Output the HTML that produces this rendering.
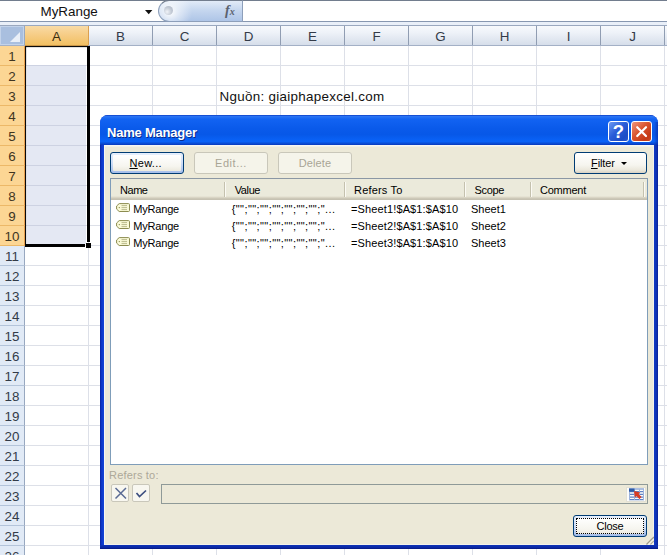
<!DOCTYPE html>
<html><head><meta charset="utf-8"><title>Name Manager</title>
<style>
html,body{margin:0;padding:0;}
body{width:667px;height:555px;overflow:hidden;background:#fff;position:relative;font-family:"Liberation Sans",sans-serif;}
.abs,.abs>*{position:absolute;}
#sheet{left:0;top:0;width:667px;height:555px;overflow:hidden;
 background-color:#fff;}
.cal{font-family:"Liberation Sans",sans-serif;font-size:13.4px;color:#1a1a1a;white-space:nowrap;}
.tah{font-family:"Liberation Sans",sans-serif;font-size:11px;color:#000;white-space:nowrap;}
.vl{position:absolute;width:1px;background:#dde0e8;top:46px;height:509px;}
.hl{position:absolute;height:1px;background:#dde0e8;left:25px;width:642px;}
.ch{position:absolute;top:26px;height:19px;width:63px;text-align:center;line-height:21px;color:#333b48;
 background:linear-gradient(#f7f9fc 0%,#eef2f8 35%,#d6deea 100%);border-right:1px solid #909db2;}
.rh{position:absolute;left:0;width:24px;height:19px;text-align:center;line-height:21px;color:#333b48;
 background:#e1eaf6;border-right:1px solid #98a8c0;border-bottom:1px solid #b4c4da;}
.rh.sel{background:#fcd694;border-bottom-color:#ecb868;border-right-color:#e8a04c;color:#40351f;}
</style></head><body>
<div id="sheet" class="abs">

<div style="left:0;top:0;width:667px;height:1px;background:#727d8e"></div>
<div style="left:0;top:1px;width:667px;height:20px;background:#fff"></div>
<div style="left:0;top:21px;width:667px;height:5px;background:#e9eff8"></div>
<div style="left:0;top:21px;width:667px;height:1px;background:#8797b0"></div>
<div style="left:0;top:25px;width:667px;height:1px;background:#9aa8bf"></div>
<div style="left:158px;top:0;width:85px;height:22px;background:radial-gradient(circle at 11px 11px,rgba(255,255,255,0.95) 0,rgba(255,255,255,0.5) 9px,rgba(255,255,255,0) 22px),linear-gradient(#e2ebf8 0%,#c6d7ef 45%,#aec5e7 100%);border-radius:11px 0 0 11px;border:1px solid #8d9fba;border-top-color:#727d8e;box-sizing:border-box"></div>
<div style="left:164px;top:6px;width:9px;height:9px;border-radius:50%;background:radial-gradient(circle at 35% 65%,#f0f3f8 0,#c4cbd6 50%,#a8b2c2 100%)"></div>
<div style="left:225px;top:2px;font-family:'Liberation Serif',serif;font-style:italic;font-weight:bold;font-size:14px;color:#5a616e;line-height:18px">f<span style="font-size:10px">x</span></div>
<div class="cal" style="left:40.5px;top:3px;line-height:18px;color:#111">MyRange</div>
<svg style="left:144px;top:9px" width="10" height="7" viewBox="0 0 10 7"><path d="M1 1h7.4l-3.7 4.3z" fill="#111"/></svg>
<div class="vl" style="left:88px"></div>
<div class="vl" style="left:152px"></div>
<div class="vl" style="left:216px"></div>
<div class="vl" style="left:280px"></div>
<div class="vl" style="left:344px"></div>
<div class="vl" style="left:408px"></div>
<div class="vl" style="left:472px"></div>
<div class="vl" style="left:536px"></div>
<div class="vl" style="left:600px"></div>
<div class="vl" style="left:664px"></div>
<div class="hl" style="top:65px"></div>
<div class="hl" style="top:85px"></div>
<div class="hl" style="top:105px"></div>
<div class="hl" style="top:125px"></div>
<div class="hl" style="top:145px"></div>
<div class="hl" style="top:165px"></div>
<div class="hl" style="top:185px"></div>
<div class="hl" style="top:205px"></div>
<div class="hl" style="top:225px"></div>
<div class="hl" style="top:245px"></div>
<div class="hl" style="top:265px"></div>
<div class="hl" style="top:285px"></div>
<div class="hl" style="top:305px"></div>
<div class="hl" style="top:325px"></div>
<div class="hl" style="top:345px"></div>
<div class="hl" style="top:365px"></div>
<div class="hl" style="top:385px"></div>
<div class="hl" style="top:405px"></div>
<div class="hl" style="top:425px"></div>
<div class="hl" style="top:445px"></div>
<div class="hl" style="top:465px"></div>
<div class="hl" style="top:485px"></div>
<div class="hl" style="top:505px"></div>
<div class="hl" style="top:525px"></div>
<div class="hl" style="top:545px"></div>
<div class="hl" style="top:565px"></div>
<div style="left:27px;top:66px;width:59px;height:178px;background:#e4e8f3"></div>
<div style="left:27px;top:65px;width:59px;height:1px;background:#cdd2e2"></div>
<div style="left:27px;top:85px;width:59px;height:1px;background:#cdd2e2"></div>
<div style="left:27px;top:105px;width:59px;height:1px;background:#cdd2e2"></div>
<div style="left:27px;top:125px;width:59px;height:1px;background:#cdd2e2"></div>
<div style="left:27px;top:145px;width:59px;height:1px;background:#cdd2e2"></div>
<div style="left:27px;top:165px;width:59px;height:1px;background:#cdd2e2"></div>
<div style="left:27px;top:185px;width:59px;height:1px;background:#cdd2e2"></div>
<div style="left:27px;top:205px;width:59px;height:1px;background:#cdd2e2"></div>
<div style="left:27px;top:225px;width:59px;height:1px;background:#cdd2e2"></div>
<div style="left:0;top:26px;width:667px;height:19px;background:linear-gradient(#f9fbfd 0%,#eef2f8 35%,#d9e0ec 100%)"></div>
<div style="left:0;top:45px;width:667px;height:1px;background:#a3b0c6"></div>
<div style="left:0;top:26px;width:24px;height:19px;background:#a9bfdf;border-right:1px solid #98a8c0;box-shadow:inset 1px 1px 0 #c3d3ea,inset -1px -1px 0 #c3d3ea"></div>
<svg style="left:9px;top:31px" width="12" height="12" viewBox="0 0 12 12"><path d="M11 1V11H1z" fill="#e9eff8"/></svg>
<div class="ch cal" style="left:25px;background:linear-gradient(#f9dba6 0%,#f6cc84 50%,#f1c063 100%);border-right-color:#dba050;color:#3a2d10">A</div>
<div class="ch cal" style="left:89px">B</div>
<div class="ch cal" style="left:153px">C</div>
<div class="ch cal" style="left:217px">D</div>
<div class="ch cal" style="left:281px">E</div>
<div class="ch cal" style="left:345px">F</div>
<div class="ch cal" style="left:409px">G</div>
<div class="ch cal" style="left:473px">H</div>
<div class="ch cal" style="left:537px">I</div>
<div class="ch cal" style="left:601px">J</div>
<div style="left:25px;top:45px;width:63px;height:1px;background:#c99548"></div>
<div class="rh cal sel" style="top:46px">1</div>
<div class="rh cal sel" style="top:66px">2</div>
<div class="rh cal sel" style="top:86px">3</div>
<div class="rh cal sel" style="top:106px">4</div>
<div class="rh cal sel" style="top:126px">5</div>
<div class="rh cal sel" style="top:146px">6</div>
<div class="rh cal sel" style="top:166px">7</div>
<div class="rh cal sel" style="top:186px">8</div>
<div class="rh cal sel" style="top:206px">9</div>
<div class="rh cal sel" style="top:226px">10</div>
<div class="rh cal" style="top:246px">11</div>
<div class="rh cal" style="top:266px">12</div>
<div class="rh cal" style="top:286px">13</div>
<div class="rh cal" style="top:306px">14</div>
<div class="rh cal" style="top:326px">15</div>
<div class="rh cal" style="top:346px">16</div>
<div class="rh cal" style="top:366px">17</div>
<div class="rh cal" style="top:386px">18</div>
<div class="rh cal" style="top:406px">19</div>
<div class="rh cal" style="top:426px">20</div>
<div class="rh cal" style="top:446px">21</div>
<div class="rh cal" style="top:466px">22</div>
<div class="rh cal" style="top:486px">23</div>
<div class="rh cal" style="top:506px">24</div>
<div class="rh cal" style="top:526px">25</div>
<div class="rh cal" style="top:546px">26</div>
<div style="left:25px;top:46px;width:65px;height:1px;background:#0a0a0a"></div>
<div style="left:25px;top:47px;width:62px;height:1px;background:rgba(0,0,0,0.12)"></div>
<div style="left:25px;top:46px;width:1px;height:201px;background:#0a0a0a"></div>
<div style="left:26px;top:47px;width:1px;height:197px;background:rgba(0,0,0,0.12)"></div>
<div style="left:87px;top:46px;width:3px;height:196px;background:#000"></div>
<div style="left:25px;top:244px;width:60px;height:3px;background:#000"></div>
<div style="left:86px;top:243px;width:5px;height:5px;background:#000"></div>
<div class="cal" style="left:219.5px;top:87px;line-height:20px;color:#111;letter-spacing:0.3px">Nguồn: giaiphapexcel.com</div>
</div>
<div id="dlg" class="abs" style="position:absolute;left:100px;top:115px;width:558px;height:434px">
<div style="left:0;top:0;width:558px;height:434px;background:#0d36c6;border-radius:8px 8px 0 0"></div>
<div style="left:0;top:30px;width:4px;height:404px;background:linear-gradient(90deg,#0a239f 0,#0d36c6 1.5px,#1545d8 4px)"></div>
<div style="left:554px;top:30px;width:4px;height:404px;background:linear-gradient(270deg,#0a1f96 0,#0d30b2 1.5px,#123ac4 4px)"></div>
<div style="left:0;top:430px;width:558px;height:4px;background:linear-gradient(0deg,#06167e 0,#0a28a4 1.5px,#0f34b8 4px)"></div>
<div style="left:0;top:0;width:558px;height:30px;border-radius:8px 8px 0 0;background:linear-gradient(#0a3cc4 0%,#2a74f4 5%,#1263f2 14%,#0a5aea 45%,#0758e8 65%,#0a63f8 88%,#0a4cd4 95%,#0838bc 100%)"></div>
<div style="left:4px;top:30px;width:550px;height:400px;background:#ece9d8;box-shadow:inset 1px 1px 0 #f6f6f2,inset 0 2px 0 #f1f0e8,inset -1px -1px 0 #f3f2ea"></div>
<div style="left:7px;top:9.5px;font-family:'Liberation Sans',sans-serif;font-weight:bold;font-size:13px;letter-spacing:-0.22px;color:#fff;line-height:16px;text-shadow:1px 1px 0 #0a2a8a;white-space:nowrap">Name Manager</div>
<div style="left:554px;top:7px;width:4px;height:23px;background:linear-gradient(90deg,rgba(8,30,150,0) 0,rgba(8,30,150,0.55) 100%)"></div>
<div style="left:508px;top:6px;width:21px;height:21px;box-sizing:border-box;border:1px solid #fff;border-radius:3px;background:linear-gradient(135deg,#6c9af2,#2a5cd8 45%,#1c4cc6 80%,#2858d2)"></div>
<div style="left:508px;top:6px;width:21px;height:21px;text-align:center;line-height:22px;color:#fff;font-weight:bold;font-size:18.5px;font-family:'Liberation Sans',sans-serif">?</div>
<div style="left:531px;top:6px;width:21px;height:21px;box-sizing:border-box;border:1px solid #fff;border-radius:3px;background:linear-gradient(135deg,#ee967c,#d8522e 45%,#c43a16 80%,#cc4a26)"></div>
<svg style="left:531px;top:6px" width="21" height="21" viewBox="0 0 21 21"><path d="M6.2 6.2L15 15M15 6.2L6.2 15" stroke="#fff" stroke-width="2.2" stroke-linecap="round"/></svg>
<div style="left:10px;top:37px;width:74px;height:22px;box-sizing:border-box;border:1px solid #003c74;border-radius:3px;background:linear-gradient(#e6effc 0%,#cfdef6 50%,#a4bdea 100%)"></div>
<div style="left:13px;top:40px;width:68px;height:16px;border-radius:1px;background:linear-gradient(#ffffff 0%,#f6f5ef 70%,#ece9de 100%)"></div>
<div class="tah" style="left:29.5px;top:37px;line-height:23px;letter-spacing:0.3px"><u>N</u>ew...</div>
<div style="left:94px;top:37px;width:74px;height:22px;box-sizing:border-box;border:1px solid #c9c7ba;border-radius:3px;background:#f5f4ea;"></div>
<div class="tah" style="left:94px;top:37px;width:74px;height:22px;text-align:center;line-height:23px;color:#a9a596;letter-spacing:0.55px">Edit...</div>
<div style="left:178px;top:37px;width:74px;height:22px;box-sizing:border-box;border:1px solid #c9c7ba;border-radius:3px;background:#f5f4ea;"></div>
<div class="tah" style="left:178px;top:37px;width:74px;height:22px;text-align:center;line-height:23px;color:#a9a596;letter-spacing:0.1px">Delete</div>
<div style="left:474px;top:37px;width:73px;height:22px;box-sizing:border-box;border:1px solid #003c74;border-radius:3px;background:linear-gradient(#ffffff 0%,#f6f5ef 60%,#ebe8dc 85%,#d8d2c4 100%);"></div>
<div class="tah" style="left:491px;top:37px;line-height:23px;letter-spacing:-0.1px"><u>F</u>ilter</div>
<div style="left:521px;top:47px;width:0;height:0;border-left:3px solid transparent;border-right:3px solid transparent;border-top:3px solid #000"></div>
<div style="left:10px;top:63px;width:538px;height:287px;box-sizing:border-box;border:1px solid #7f9db9;border-top-color:#8b97a4;background:#fff"></div>
<div style="left:11px;top:64px;width:536px;height:21px;background:linear-gradient(#ebeadb 0px,#ebeadb 17px,#e0dccc 18px,#d2cebd 19px,#c6c2b2 20px,#c6c2b2 21px)"></div>
<div style="left:124px;top:67px;width:1px;height:15px;background:#c4c1ae"></div>
<div style="left:125px;top:67px;width:1px;height:15px;background:#fbfaf4"></div>
<div style="left:244px;top:67px;width:1px;height:15px;background:#c4c1ae"></div>
<div style="left:245px;top:67px;width:1px;height:15px;background:#fbfaf4"></div>
<div style="left:364px;top:67px;width:1px;height:15px;background:#c4c1ae"></div>
<div style="left:365px;top:67px;width:1px;height:15px;background:#fbfaf4"></div>
<div style="left:430px;top:67px;width:1px;height:15px;background:#c4c1ae"></div>
<div style="left:431px;top:67px;width:1px;height:15px;background:#fbfaf4"></div>
<div style="left:543px;top:67px;width:1px;height:15px;background:#c4c1ae"></div>
<div style="left:544px;top:67px;width:1px;height:15px;background:#fbfaf4"></div>
<div class="tah" style="left:20px;top:66px;line-height:19px;letter-spacing:-0.45px">Name</div>
<div class="tah" style="left:134.7px;top:66px;line-height:19px;letter-spacing:-0.38px">Value</div>
<div class="tah" style="left:254px;top:66px;line-height:19px;letter-spacing:0.19px">Refers To</div>
<div class="tah" style="left:374.5px;top:66px;line-height:19px;letter-spacing:-0.34px">Scope</div>
<div class="tah" style="left:440px;top:66px;line-height:19px;letter-spacing:-0.24px">Comment</div>
<svg style="left:16px;top:88px" width="14" height="10" viewBox="0 0 14 10"><path d="M3.2 0.6h9.3a1 1 0 0 1 1 1v5.9a1 1 0 0 1-1 1h-9.3l-2.6-2.4v-3.1z" fill="#fafad8" stroke="#8c8c50" stroke-width="1"/><path d="M5.5 2.6h5.5M5.5 4.6h5.5M5.5 6.6h5.5" stroke="#b4b484" stroke-width="0.9"/><circle cx="3.3" cy="4.6" r="0.7" fill="#8c8c50"/></svg>
<div class="tah" style="left:33.30000000000001px;top:86px;line-height:17px;letter-spacing:-0.2px">MyRange</div>
<div class="tah" style="left:131.7px;top:86px;line-height:17px;letter-spacing:0.42px">{"";"";"";"";"";"";"";"...</div>
<div class="tah" style="left:251px;top:86px;line-height:17px;letter-spacing:0.13px">=Sheet1!$A$1:$A$10</div>
<div class="tah" style="left:371px;top:86px;line-height:17px">Sheet1</div>
<svg style="left:16px;top:105px" width="14" height="10" viewBox="0 0 14 10"><path d="M3.2 0.6h9.3a1 1 0 0 1 1 1v5.9a1 1 0 0 1-1 1h-9.3l-2.6-2.4v-3.1z" fill="#fafad8" stroke="#8c8c50" stroke-width="1"/><path d="M5.5 2.6h5.5M5.5 4.6h5.5M5.5 6.6h5.5" stroke="#b4b484" stroke-width="0.9"/><circle cx="3.3" cy="4.6" r="0.7" fill="#8c8c50"/></svg>
<div class="tah" style="left:33.30000000000001px;top:103px;line-height:17px;letter-spacing:-0.2px">MyRange</div>
<div class="tah" style="left:131.7px;top:103px;line-height:17px;letter-spacing:0.42px">{"";"";"";"";"";"";"";"...</div>
<div class="tah" style="left:251px;top:103px;line-height:17px;letter-spacing:0.13px">=Sheet2!$A$1:$A$10</div>
<div class="tah" style="left:371px;top:103px;line-height:17px">Sheet2</div>
<svg style="left:16px;top:122px" width="14" height="10" viewBox="0 0 14 10"><path d="M3.2 0.6h9.3a1 1 0 0 1 1 1v5.9a1 1 0 0 1-1 1h-9.3l-2.6-2.4v-3.1z" fill="#fafad8" stroke="#8c8c50" stroke-width="1"/><path d="M5.5 2.6h5.5M5.5 4.6h5.5M5.5 6.6h5.5" stroke="#b4b484" stroke-width="0.9"/><circle cx="3.3" cy="4.6" r="0.7" fill="#8c8c50"/></svg>
<div class="tah" style="left:33.30000000000001px;top:120px;line-height:17px;letter-spacing:-0.2px">MyRange</div>
<div class="tah" style="left:131.7px;top:120px;line-height:17px;letter-spacing:0.42px">{"";"";"";"";"";"";"";"...</div>
<div class="tah" style="left:251px;top:120px;line-height:17px;letter-spacing:0.13px">=Sheet3!$A$1:$A$10</div>
<div class="tah" style="left:371px;top:120px;line-height:17px">Sheet3</div>
<div class="tah" style="left:9px;top:353px;line-height:14px;color:#aca899;letter-spacing:0.2px">Refers to:</div>
<div style="left:11px;top:369px;width:18px;height:18px;box-sizing:border-box;border:1px solid #c9c7ba;border-radius:2px;background:#f8f7f0"></div>
<svg style="left:11px;top:369px" width="18" height="18" viewBox="0 0 18 18"><path d="M4.5 4L15 14.5M15 4L4.5 14.5" stroke="#5a6b94" stroke-width="1.5"/></svg>
<div style="left:32px;top:369px;width:18px;height:18px;box-sizing:border-box;border:1px solid #c9c7ba;border-radius:2px;background:#f8f7f0"></div>
<svg style="left:32px;top:369px" width="18" height="18" viewBox="0 0 18 18"><path d="M4.5 9L7.5 12.5L14 6.5" stroke="#3d4f80" stroke-width="1.7" fill="none"/></svg>
<div style="left:61px;top:369px;width:487px;height:20px;box-sizing:border-box;border:1px solid #8f9a98;background:#ece9d8"></div>
<svg style="left:526px;top:372px" width="20" height="15" viewBox="0 0 20 15"><rect x="0.5" y="0.5" width="19" height="14" fill="#fcfcfa" stroke="#e2e0d4"/><g stroke="#5f82c6" stroke-width="1.2"><path d="M3 2h15M3 4.7h15M3 7.4h15M3 10.1h15M3 12.6h15"/><path d="M3.5 2v11M8.5 2v11M13.5 2v11M17.5 2v11" stroke="#9db3dc" stroke-width="1"/></g><rect x="3" y="1.5" width="5.5" height="3.2" fill="#2f5da8"/><path d="M8 4l6.2 1.4l-1.6 1.5l3 3l-2.2 2.2l-3-3l-1.5 1.6z" fill="#d83a22"/></svg>
<div style="left:473px;top:400px;width:74px;height:22px;box-sizing:border-box;border:1px solid #003c74;border-radius:3px;background:linear-gradient(#e6effc 0%,#cfdef6 50%,#a4bdea 100%)"></div>
<div style="left:476px;top:403px;width:68px;height:16px;border-radius:1px;background:linear-gradient(#ffffff 0%,#f6f5ef 70%,#ece9de 100%)"></div>
<div style="left:476px;top:403px;width:68px;height:16px;box-sizing:border-box;border:1px dotted #000"></div>
<div class="tah" style="left:473px;top:400px;width:74px;height:22px;text-align:center;line-height:23px;letter-spacing:-0.25px">Close</div>
<svg style="left:542px;top:418px" width="12" height="12" viewBox="0 0 12 12"><path d="M12 4L4.5 11.5" stroke="#a09c8a" stroke-width="1.4"/><path d="M12 5.6L6.1 11.5" stroke="#fbfaf2" stroke-width="1"/><path d="M12 8L8.5 11.5" stroke="#b4b09e" stroke-width="1.2"/><path d="M12 9.4L9.9 11.5" stroke="#fbfaf2" stroke-width="0.9"/></svg>
</div>
</body></html>
